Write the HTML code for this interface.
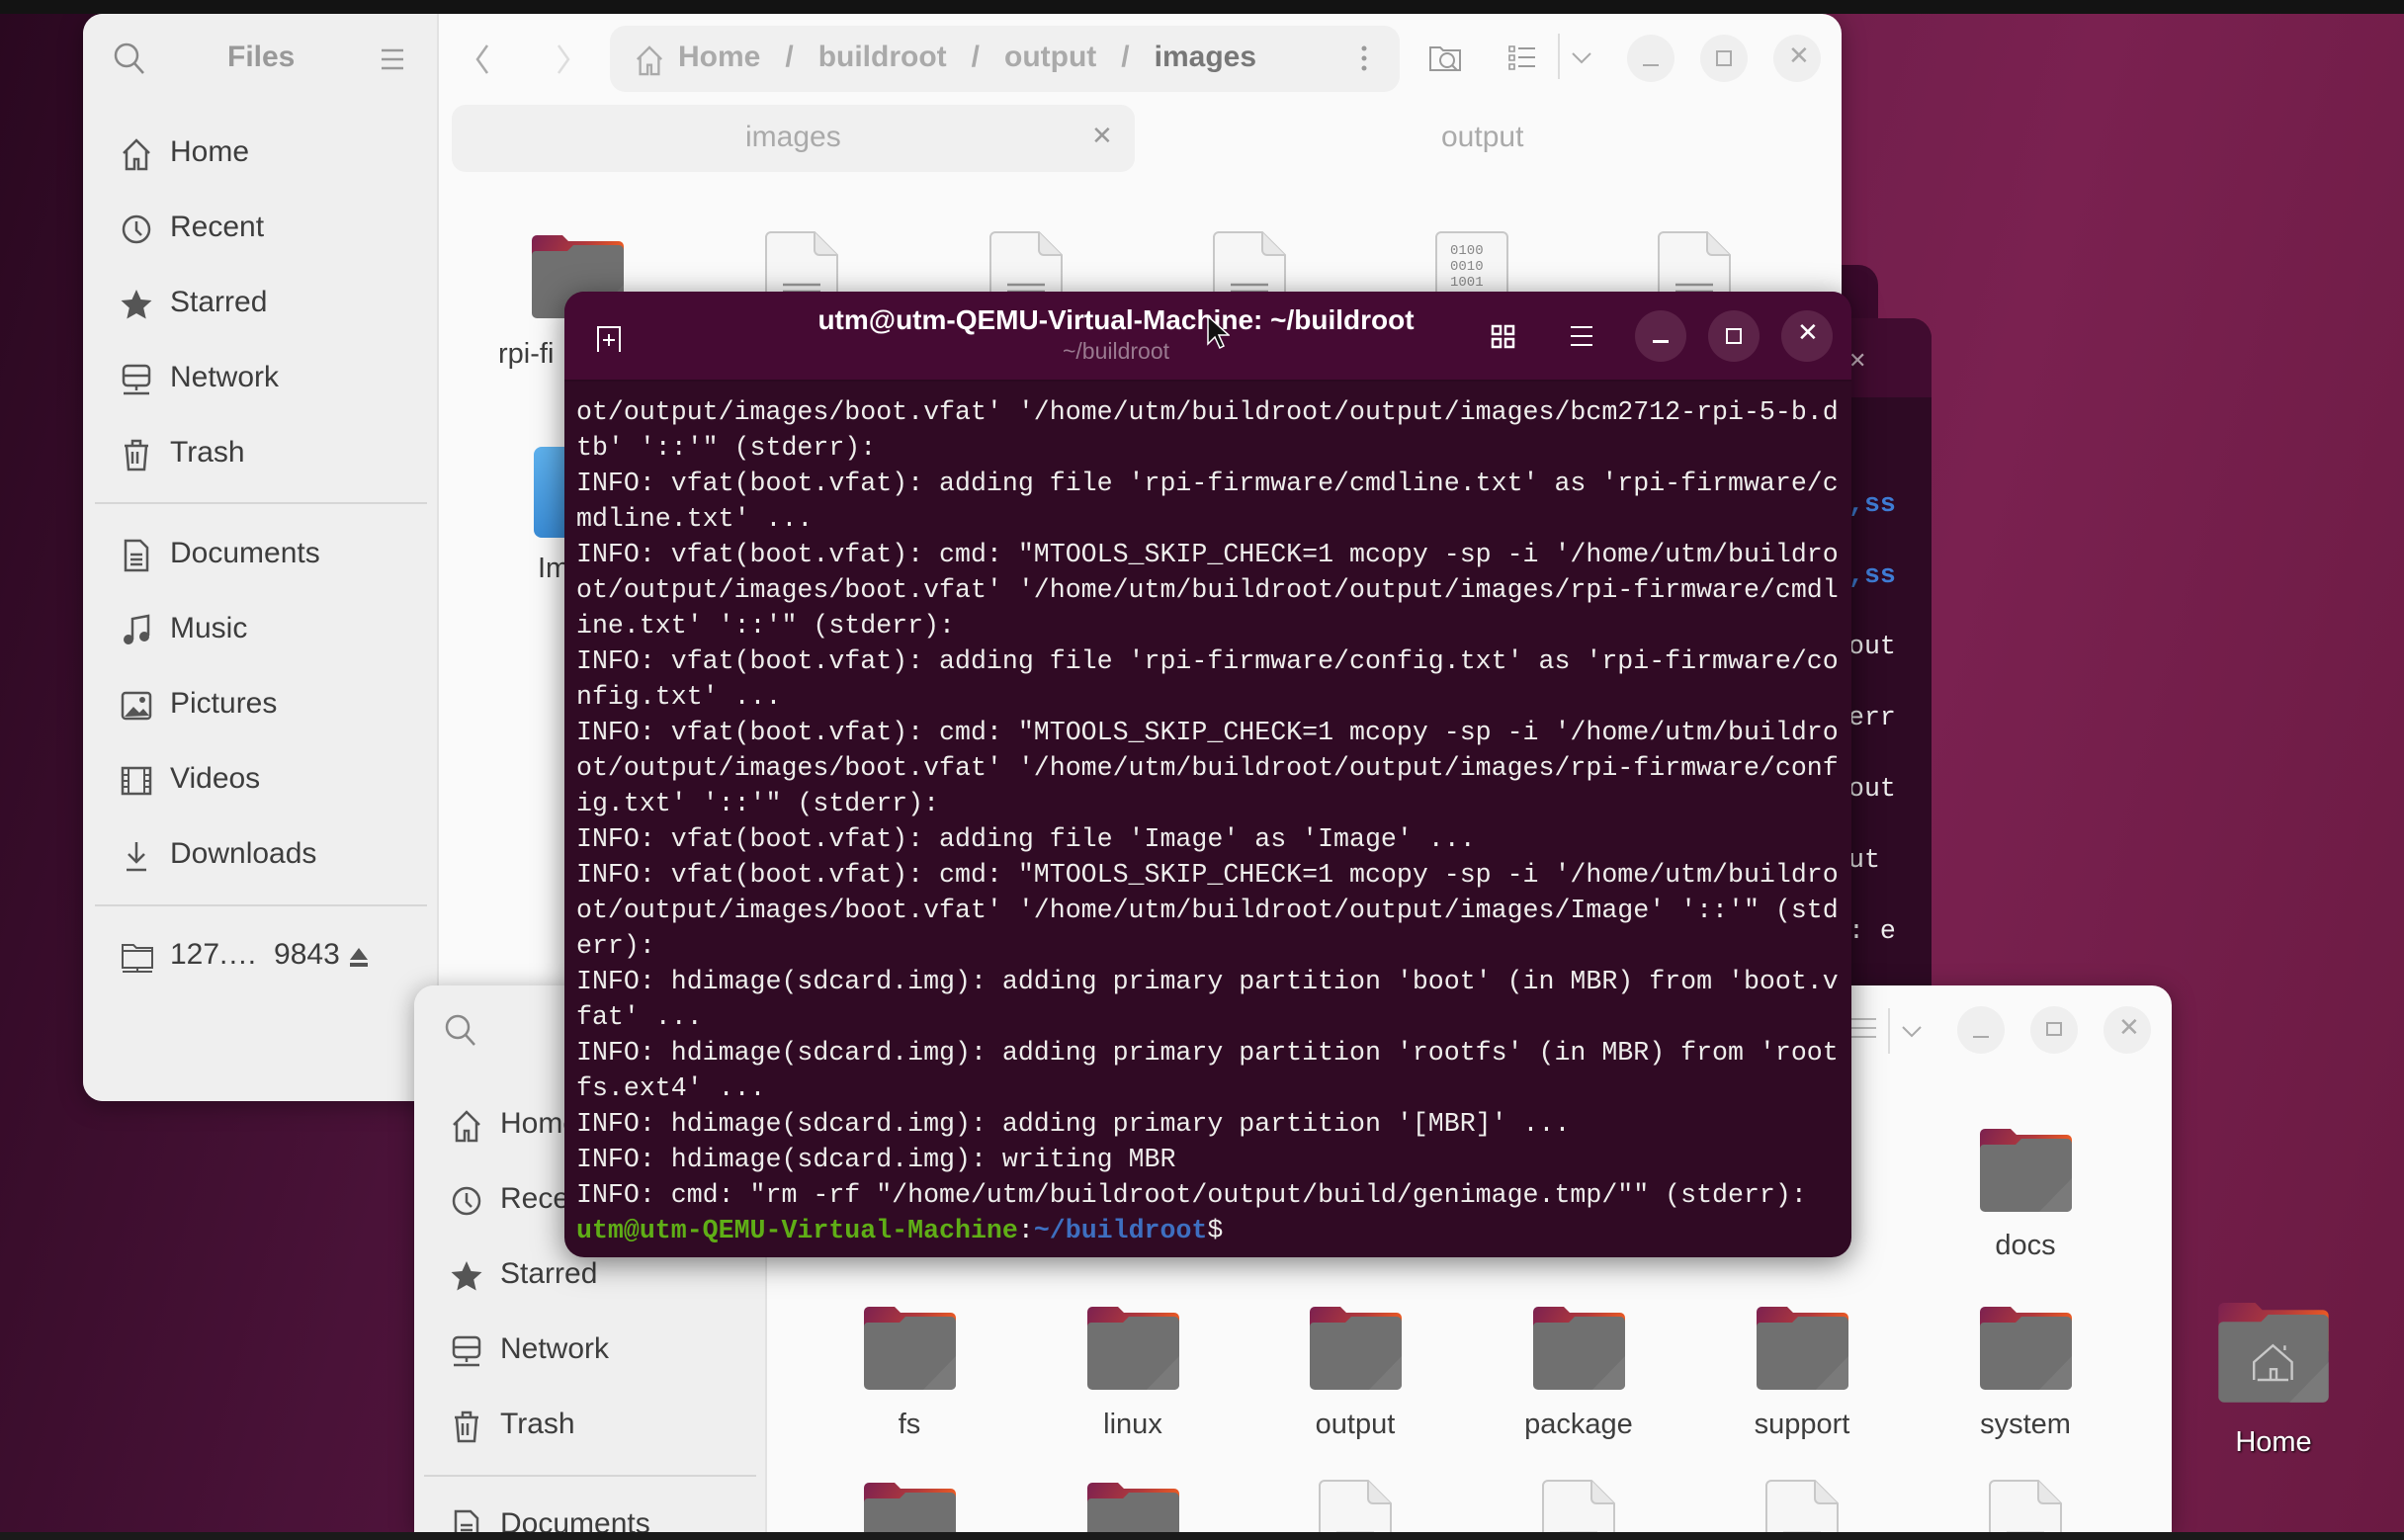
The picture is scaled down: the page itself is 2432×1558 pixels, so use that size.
<!DOCTYPE html>
<html style="width:2432px;height:1558px;overflow:hidden"><head><meta charset="utf-8">
<style>
*{margin:0;padding:0;box-sizing:border-box}
body{width:2432px;height:1558px;overflow:hidden;position:relative;font-family:"Liberation Sans",sans-serif;
background:linear-gradient(105deg,#2a0820 0%,#4a1238 25%,#6a1c48 55%,#7a2150 75%,#6a1a42 100%);}
.a{position:absolute}
.topbar{left:0;top:0;width:2432px;height:14px;background:#131313;z-index:50}
.botbar{left:0;top:1550px;width:2432px;height:8px;background:#1a1a1a;z-index:50}
.win{background:#fafafa;border-radius:20px;overflow:hidden;box-shadow:0 4px 24px rgba(0,0,0,.35)}
.side{background:#efefef;border-right:2px solid #e2e2e2}
.si{position:absolute;font-size:30px;color:#3d3d3d;white-space:nowrap}
.si svg{position:absolute;left:-50px;top:2px}
.sep{position:absolute;height:2px;background:#d6d6d6}
.ctl{position:absolute;width:48px;height:48px;border-radius:50%;background:#efefef}
.lbl{position:absolute;font-size:29px;color:#3d3d3d;text-align:center;width:200px}
.term{font-family:"Liberation Mono",monospace;font-size:26.6px;line-height:36px;color:#eeeeec;white-space:pre}
.tb{position:absolute;width:52px;height:52px;border-radius:50%;background:#5c2348}
</style></head><body>
<svg width="0" height="0" style="position:absolute">
<defs>
<linearGradient id="fg" x1="0" y1="0" x2="1" y2="0.25"><stop offset="0" stop-color="#7c2150"/><stop offset="0.6" stop-color="#b23a3c"/><stop offset="1" stop-color="#ea5a24"/></linearGradient>
<symbol id="folder" viewBox="0 0 93 85"><path d="M5 0h26l6 6h51a5 5 0 0 1 5 5v30H0V5a5 5 0 0 1 5-5z" fill="url(#fg)"/><path d="M0 20a4 4 0 0 1 4-4h32l6-6h46a5 5 0 0 1 5 5v64a5 5 0 0 1-5 5H5a5 5 0 0 1-5-5z" fill="#707070"/><path d="M93 50v29a5 5 0 0 1-5 5H60z" fill="#7a7a7a"/></symbol>
<symbol id="file" viewBox="0 0 74 90"><path d="M6 1h44l23 23v60a5 5 0 0 1-5 5H6a5 5 0 0 1-5-5V6a5 5 0 0 1 5-5z" fill="#f6f6f6" stroke="#c8c8c8" stroke-width="2"/><path d="M50 1v18a5 5 0 0 0 5 5h18" fill="#e8e8e8" stroke="#c8c8c8" stroke-width="2"/><path d="M18 54h38M18 61h38M18 68h38M18 75h38" stroke="#9a9a9a" stroke-width="2.5"/></symbol>
</defs></svg>
<div class="a topbar"></div>

<div class="a" style="left:1800px;top:268px;width:100px;height:760px;background:#3a0a2c;border-radius:20px"></div>
<div class="a" style="left:1800px;top:322px;width:154px;height:700px;background:#2e0a24;border-radius:20px;overflow:hidden">
 <div class="a" style="left:0;top:0;width:154px;height:80px;background:#410c30"></div>
 <div class="a" style="left:70px;top:30px;font-size:22px;color:#c9b6c2">✕</div>
 <div class="a term" style="left:70px;top:170px;color:#eee"><span style="color:#3f7dd6;font-weight:bold">,ss</span>

<span style="color:#3f7dd6;font-weight:bold">,ss</span>

out

err

out

ut

: e</div>
</div>

<div class="a win" style="left:84px;top:14px;width:1779px;height:1100px">
 <div class="a side" style="left:0;top:0;width:360px;height:1100px"></div>
 <svg class="a" style="left:30px;top:28px" width="34" height="36" viewBox="0 0 34 36"><circle cx="14" cy="14" r="11" fill="none" stroke="#888" stroke-width="2.5"/><path d="M22 22l9 10" stroke="#888" stroke-width="2.5"/></svg>
 <div class="a" style="left:146px;top:27px;font-size:30px;font-weight:bold;color:#999">Files</div>
 <svg class="a" style="left:302px;top:34px" width="22" height="24"><path d="M0 3h22M0 12h22M0 21h22" stroke="#999" stroke-width="2.5"/></svg>
 <div class="si" style="left:88px;top:123px"><svg width="32" height="34" viewBox="0 0 32 34"><path d="M3 16L16 3l13 13M6 13v19h8V22h4v10h8V13" fill="none" stroke="#555" stroke-width="2.5"/></svg>Home</div>
 <div class="si" style="left:88px;top:199px"><svg width="32" height="34" viewBox="0 0 32 34"><circle cx="16" cy="17" r="13" fill="none" stroke="#555" stroke-width="2.5"/><path d="M16 9v9l5 5" stroke="#555" stroke-width="2.5" fill="none"/></svg>Recent</div>
 <div class="si" style="left:88px;top:275px"><svg width="32" height="34" viewBox="0 0 32 34"><path d="M16 2l4.5 10 11 1-8.3 7.5 2.5 11L16 26l-9.7 5.5 2.5-11L.5 13l11-1z" fill="#555"/></svg>Starred</div>
 <div class="si" style="left:88px;top:351px"><svg width="32" height="34" viewBox="0 0 32 34"><rect x="3" y="3" width="26" height="20" rx="4" fill="none" stroke="#555" stroke-width="2.5"/><path d="M3 13h26M16 23v5M3 31h26" stroke="#555" stroke-width="2.5"/></svg>Network</div>
 <div class="si" style="left:88px;top:427px"><svg width="32" height="34" viewBox="0 0 32 34"><path d="M4 8h24M12 8V3h8v5M6 8l2 24h16l2-24M12 14v12M17 14v12" fill="none" stroke="#555" stroke-width="2.5"/></svg>Trash</div>
 <div class="sep" style="left:12px;top:494px;width:336px"></div>
 <div class="si" style="left:88px;top:529px"><svg width="32" height="34" viewBox="0 0 32 34"><path d="M5 2h15l7 7v23H5z" fill="none" stroke="#555" stroke-width="2.5"/><path d="M10 16h12M10 21h12M10 26h12" stroke="#555" stroke-width="2.5"/></svg>Documents</div>
 <div class="si" style="left:88px;top:605px"><svg width="32" height="34" viewBox="0 0 32 34"><path d="M12 26V5l16-3v20" fill="none" stroke="#555" stroke-width="2.5"/><circle cx="8" cy="26" r="5" fill="#555"/><circle cx="24" cy="23" r="5" fill="#555"/></svg>Music</div>
 <div class="si" style="left:88px;top:681px"><svg width="32" height="34" viewBox="0 0 32 34"><rect x="2" y="4" width="28" height="26" rx="3" fill="none" stroke="#555" stroke-width="2.5"/><path d="M4 28l9-10 6 6 4-4 6 7z" fill="#555"/><circle cx="22" cy="11" r="3" fill="#555"/></svg>Pictures</div>
 <div class="si" style="left:88px;top:757px"><svg width="32" height="34" viewBox="0 0 32 34"><rect x="2" y="4" width="28" height="26" fill="none" stroke="#555" stroke-width="2.5"/><path d="M8 4v26M24 4v26M2 11h6M2 17h6M2 23h6M24 11h6M24 17h6M24 23h6" stroke="#555" stroke-width="2"/></svg>Videos</div>
 <div class="si" style="left:88px;top:833px"><svg width="32" height="34" viewBox="0 0 32 34"><path d="M16 3v20M8 15l8 8 8-8M6 31h20" fill="none" stroke="#555" stroke-width="2.5"/></svg>Downloads</div>
 <div class="sep" style="left:12px;top:901px;width:336px"></div>
 <div class="si" style="left:88px;top:935px"><svg width="34" height="34" viewBox="0 0 34 34"><path d="M2 5h11l3 3h16v20H2zM2 11h30M17 28v3M2 32h30" fill="none" stroke="#555" stroke-width="2"/></svg>127.…&nbsp; 9843</div>
 <svg class="a" style="left:270px;top:945px" width="18" height="20"><path d="M9 0l9 12H0z M0 15h18v4H0z" fill="#555"/></svg>
 <svg class="a" style="left:396px;top:30px" width="16" height="32"><path d="M13 2L3 16l10 14" fill="none" stroke="#aaa" stroke-width="2.5"/></svg>
 <svg class="a" style="left:478px;top:30px" width="16" height="32"><path d="M3 2l10 14L3 30" fill="none" stroke="#ddd" stroke-width="2.5"/></svg>
 <div class="a" style="left:533px;top:12px;width:799px;height:67px;background:#f0f0f0;border-radius:16px"></div>
 <svg class="a" style="left:558px;top:30px" width="30" height="34" viewBox="0 0 32 34"><path d="M3 16L16 3l13 13M6 13v19h8V22h4v10h8V13" fill="none" stroke="#aaa" stroke-width="2.5"/></svg>
 <div class="a" style="left:602px;top:27px;font-size:30px;color:#aaa;white-space:pre;font-weight:bold">Home   /   buildroot   /   output   /   <span style="color:#777">images</span></div>
 <svg class="a" style="left:1293px;top:32px" width="6" height="28"><circle cx="3" cy="3" r="2.5" fill="#999"/><circle cx="3" cy="13" r="2.5" fill="#999"/><circle cx="3" cy="23" r="2.5" fill="#999"/></svg>
 <svg class="a" style="left:1361px;top:26px" width="36" height="36"><path d="M2 8h10l3 3h17v20H2z" fill="none" stroke="#999" stroke-width="2"/><circle cx="19" cy="21" r="7" fill="none" stroke="#999" stroke-width="2"/><path d="M24 26l5 5" stroke="#999" stroke-width="2"/></svg>
 <svg class="a" style="left:1442px;top:30px" width="28" height="28"><path d="M1 3h5v5H1zM1 12h5v5H1zM1 21h5v5H1z" fill="none" stroke="#999" stroke-width="1.6"/><path d="M10 5h17M10 14h17M10 23h17" stroke="#999" stroke-width="2"/></svg>
 <div class="a" style="left:1492px;top:20px;width:2px;height:46px;background:#ddd"></div>
 <svg class="a" style="left:1505px;top:38px" width="22" height="14"><path d="M2 2l9 9 9-9" fill="none" stroke="#aaa" stroke-width="2"/></svg>
 <div class="ctl" style="left:1562px;top:21px"></div><div class="a" style="left:1578px;top:51px;width:16px;height:2px;background:#aaa"></div>
 <div class="ctl" style="left:1636px;top:21px"></div><div class="a" style="left:1652px;top:37px;width:16px;height:16px;border:2px solid #aaa"></div>
 <div class="ctl" style="left:1710px;top:21px"></div><div class="a" style="left:1725px;top:27px;font-size:26px;color:#aaa">✕</div>
 <div class="a" style="left:373px;top:92px;width:691px;height:68px;background:#f0f0f0;border-radius:14px"></div>
 <div class="a" style="left:670px;top:108px;font-size:30px;color:#aaa">images</div>
 <div class="a" style="left:1020px;top:108px;font-size:26px;color:#999">✕</div>
 <div class="a" style="left:1374px;top:108px;font-size:30px;color:#aaa">output</div>
 <svg class="a" style="left:454px;top:224px" width="93" height="85"><use href="#folder"/></svg>
 <div class="a" style="left:420px;top:328px;font-size:29px;color:#3d3d3d">rpi-fi</div>
 <svg class="a" style="left:690px;top:220px" width="74" height="90"><use href="#file"/></svg>
 <svg class="a" style="left:917px;top:220px" width="74" height="90"><use href="#file"/></svg>
 <svg class="a" style="left:1143px;top:220px" width="74" height="90"><use href="#file"/></svg>
 <div class="a" style="left:1368px;top:220px;width:74px;height:90px;border:2px solid #c8c8c8;border-radius:6px;background:#f6f6f6;font-family:'Liberation Mono',monospace;font-size:14px;line-height:16px;color:#888;padding:10px 0 0 13px">0100<br>0010<br>1001</div>
 <svg class="a" style="left:1593px;top:220px" width="74" height="90"><use href="#file"/></svg>
 <div class="a" style="left:456px;top:438px;width:60px;height:92px;background:linear-gradient(#5fb2ee,#3a8cd6);border-radius:8px"></div>
 <div class="a" style="left:460px;top:545px;font-size:29px;color:#3d3d3d">Im</div>
</div>

<div class="a win" style="left:419px;top:997px;width:1778px;height:553px;border-radius:20px 20px 0 0">
 <div class="a side" style="left:0;top:0;width:357px;height:553px"></div>
 <svg class="a" style="left:30px;top:28px" width="34" height="36" viewBox="0 0 34 36"><circle cx="14" cy="14" r="11" fill="none" stroke="#888" stroke-width="2.5"/><path d="M22 22l9 10" stroke="#888" stroke-width="2.5"/></svg>
 <div class="si" style="left:87px;top:123px"><svg width="32" height="34" viewBox="0 0 32 34"><path d="M3 16L16 3l13 13M6 13v19h8V22h4v10h8V13" fill="none" stroke="#555" stroke-width="2.5"/></svg>Home</div>
 <div class="si" style="left:87px;top:199px"><svg width="32" height="34" viewBox="0 0 32 34"><circle cx="16" cy="17" r="13" fill="none" stroke="#555" stroke-width="2.5"/><path d="M16 9v9l5 5" stroke="#555" stroke-width="2.5" fill="none"/></svg>Recent</div>
 <div class="si" style="left:87px;top:275px"><svg width="32" height="34" viewBox="0 0 32 34"><path d="M16 2l4.5 10 11 1-8.3 7.5 2.5 11L16 26l-9.7 5.5 2.5-11L.5 13l11-1z" fill="#555"/></svg>Starred</div>
 <div class="si" style="left:87px;top:351px"><svg width="32" height="34" viewBox="0 0 32 34"><rect x="3" y="3" width="26" height="20" rx="4" fill="none" stroke="#555" stroke-width="2.5"/><path d="M3 13h26M16 23v5M3 31h26" stroke="#555" stroke-width="2.5"/></svg>Network</div>
 <div class="si" style="left:87px;top:427px"><svg width="32" height="34" viewBox="0 0 32 34"><path d="M4 8h24M12 8V3h8v5M6 8l2 24h16l2-24M12 14v12M17 14v12" fill="none" stroke="#555" stroke-width="2.5"/></svg>Trash</div>
 <div class="sep" style="left:10px;top:495px;width:336px"></div>
 <div class="si" style="left:87px;top:528px"><svg width="32" height="34" viewBox="0 0 32 34"><path d="M5 2h15l7 7v23H5z" fill="none" stroke="#555" stroke-width="2.5"/><path d="M10 16h12M10 21h12M10 26h12" stroke="#555" stroke-width="2.5"/></svg>Documents</div>
 <svg class="a" style="left:1451px;top:32px" width="28" height="22"><path d="M0 2h28M0 11h28M0 20h28" stroke="#bbb" stroke-width="2"/></svg>
 <div class="a" style="left:1491px;top:23px;width:2px;height:46px;background:#ddd"></div>
 <svg class="a" style="left:1504px;top:40px" width="22" height="14"><path d="M2 2l9 9 9-9" fill="none" stroke="#aaa" stroke-width="2"/></svg>
 <div class="ctl" style="left:1561px;top:21px"></div><div class="a" style="left:1577px;top:51px;width:16px;height:2px;background:#aaa"></div>
 <div class="ctl" style="left:1635px;top:21px"></div><div class="a" style="left:1651px;top:37px;width:16px;height:14px;border:2px solid #aaa"></div>
 <div class="ctl" style="left:1709px;top:21px"></div><div class="a" style="left:1724px;top:27px;font-size:26px;color:#aaa">✕</div>
 <svg class="a" style="left:1584px;top:145px" width="93" height="85"><use href="#folder"/></svg>
 <div class="lbl" style="left:1530px;top:247px">docs</div>
 <svg class="a" style="left:455px;top:325px" width="93" height="85"><use href="#folder"/></svg>
 <svg class="a" style="left:681px;top:325px" width="93" height="85"><use href="#folder"/></svg>
 <svg class="a" style="left:906px;top:325px" width="93" height="85"><use href="#folder"/></svg>
 <svg class="a" style="left:1132px;top:325px" width="93" height="85"><use href="#folder"/></svg>
 <svg class="a" style="left:1358px;top:325px" width="93" height="85"><use href="#folder"/></svg>
 <svg class="a" style="left:1584px;top:325px" width="93" height="85"><use href="#folder"/></svg>
 <div class="lbl" style="left:401px;top:428px">fs</div>
 <div class="lbl" style="left:627px;top:428px">linux</div>
 <div class="lbl" style="left:852px;top:428px">output</div>
 <div class="lbl" style="left:1078px;top:428px">package</div>
 <div class="lbl" style="left:1304px;top:428px">support</div>
 <div class="lbl" style="left:1530px;top:428px">system</div>
 <svg class="a" style="left:455px;top:503px" width="93" height="85"><use href="#folder"/></svg>
 <svg class="a" style="left:681px;top:503px" width="93" height="85"><use href="#folder"/></svg>
 <svg class="a" style="left:915px;top:500px" width="74" height="90"><use href="#file"/></svg>
 <svg class="a" style="left:1141px;top:500px" width="74" height="90"><use href="#file"/></svg>
 <svg class="a" style="left:1367px;top:500px" width="74" height="90"><use href="#file"/></svg>
 <svg class="a" style="left:1593px;top:500px" width="74" height="90"><use href="#file"/></svg>
</div>

<svg class="a" style="left:2244px;top:1318px" width="112" height="102" viewBox="0 0 93 85"><use href="#folder"/><path d="M30 65V50l16-14 16 14v15M33 65h26M44 65v-9h5v9M56 40v-4" fill="none" stroke="#c8c8c8" stroke-width="2"/></svg>
<div class="a" style="left:2200px;top:1443px;width:200px;text-align:center;font-size:29px;color:#fff;text-shadow:1px 1px 2px #000">Home</div>

<div class="a" style="left:571px;top:295px;width:1302px;height:977px;background:#300a24;border-radius:20px;overflow:hidden;box-shadow:0 6px 30px rgba(0,0,0,.5)">
 <div class="a" style="left:0;top:0;width:1302px;height:91px;background:#450a33;border-bottom:2px solid #2a0820"></div>
 <svg class="a" style="left:32px;top:34px" width="28" height="28"><path d="M2 27V2h22v25" fill="none" stroke="#fff" stroke-width="2"/><path d="M13 9v12M7 15h12" stroke="#fff" stroke-width="2"/></svg>
 <div class="a" style="left:0;top:13px;width:1116px;text-align:center;font-size:28px;font-weight:bold;color:#fff">utm@utm-QEMU-Virtual-Machine: ~/buildroot</div>
 <div class="a" style="left:0;top:47px;width:1116px;text-align:center;font-size:23px;color:#9a7a90">~/buildroot</div>
 <svg class="a" style="left:937px;top:33px" width="26" height="26"><path d="M2 2h8v8H2zM15 2h8v8h-8zM2 15h8v8H2zM15 15h8v8h-8z" fill="none" stroke="#fff" stroke-width="2.5"/></svg>
 <svg class="a" style="left:1018px;top:34px" width="22" height="22"><path d="M0 2h22M0 11h22M0 20h22" stroke="#fff" stroke-width="2"/></svg>
 <div class="tb" style="left:1083px;top:19px"></div><div class="a" style="left:1101px;top:49px;width:16px;height:3px;background:#fff"></div>
 <div class="tb" style="left:1157px;top:19px"></div><div class="a" style="left:1175px;top:37px;width:16px;height:16px;border:2.5px solid #fff"></div>
 <div class="tb" style="left:1231px;top:19px"></div><div class="a" style="left:1247px;top:26px;font-size:26px;color:#fff">✕</div>
 <div class="a term" style="left:12px;top:104px">ot/output/images/boot.vfat' '/home/utm/buildroot/output/images/bcm2712-rpi-5-b.d
tb' '::'" (stderr):
INFO: vfat(boot.vfat): adding file 'rpi-firmware/cmdline.txt' as 'rpi-firmware/c
mdline.txt' ...
INFO: vfat(boot.vfat): cmd: "MTOOLS_SKIP_CHECK=1 mcopy -sp -i '/home/utm/buildro
ot/output/images/boot.vfat' '/home/utm/buildroot/output/images/rpi-firmware/cmdl
ine.txt' '::'" (stderr):
INFO: vfat(boot.vfat): adding file 'rpi-firmware/config.txt' as 'rpi-firmware/co
nfig.txt' ...
INFO: vfat(boot.vfat): cmd: "MTOOLS_SKIP_CHECK=1 mcopy -sp -i '/home/utm/buildro
ot/output/images/boot.vfat' '/home/utm/buildroot/output/images/rpi-firmware/conf
ig.txt' '::'" (stderr):
INFO: vfat(boot.vfat): adding file 'Image' as 'Image' ...
INFO: vfat(boot.vfat): cmd: "MTOOLS_SKIP_CHECK=1 mcopy -sp -i '/home/utm/buildro
ot/output/images/boot.vfat' '/home/utm/buildroot/output/images/Image' '::'" (std
err):
INFO: hdimage(sdcard.img): adding primary partition 'boot' (in MBR) from 'boot.v
fat' ...
INFO: hdimage(sdcard.img): adding primary partition 'rootfs' (in MBR) from 'root
fs.ext4' ...
INFO: hdimage(sdcard.img): adding primary partition '[MBR]' ...
INFO: hdimage(sdcard.img): writing MBR
INFO: cmd: "rm -rf "/home/utm/buildroot/output/build/genimage.tmp/"" (stderr):
<span style="color:#5fae16;font-weight:bold">utm@utm-QEMU-Virtual-Machine</span>:<span style="color:#3e6fc0;font-weight:bold">~/buildroot</span>$</div>
</div>
<svg class="a" style="left:1220px;top:318px" width="24" height="36"><path d="M2 2v28l7-7 5 11 4-2-5-11h10z" fill="#111" stroke="#fff" stroke-width="1.5"/></svg>
<div class="a botbar"></div>
</body></html>
